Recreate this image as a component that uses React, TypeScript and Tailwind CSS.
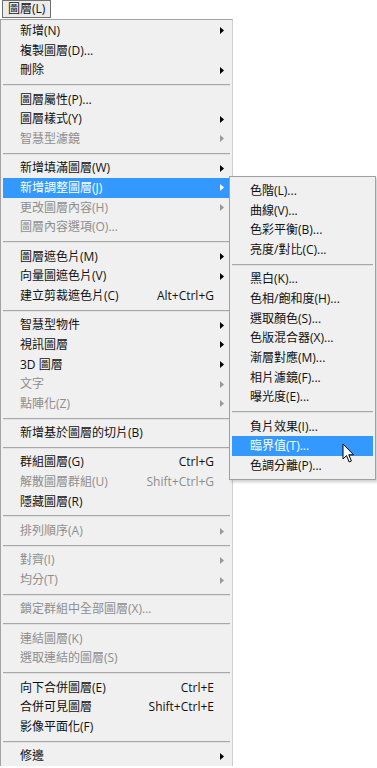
import React from "react";

type Item =
  | { sep: true }
  | {
      sep?: false;
      label: string;
      shortcut?: string;
      arrow?: boolean;
      disabled?: boolean;
      active?: boolean;
    };

const S: Item = { sep: true };

const mainItems: Item[] = [
  { label: "新增(N)", arrow: true },
  { label: "複製圖層(D)..." },
  { label: "刪除", arrow: true },
  S,
  { label: "圖層屬性(P)..." },
  { label: "圖層樣式(Y)", arrow: true },
  { label: "智慧型濾鏡", arrow: true, disabled: true },
  S,
  { label: "新增填滿圖層(W)", arrow: true },
  { label: "新增調整圖層(J)", arrow: true, active: true },
  { label: "更改圖層內容(H)", arrow: true, disabled: true },
  { label: "圖層內容選項(O)...", disabled: true },
  S,
  { label: "圖層遮色片(M)", arrow: true },
  { label: "向量圖遮色片(V)", arrow: true },
  { label: "建立剪裁遮色片(C)", shortcut: "Alt+Ctrl+G" },
  S,
  { label: "智慧型物件", arrow: true },
  { label: "視訊圖層", arrow: true },
  { label: "3D 圖層", arrow: true },
  { label: "文字", arrow: true, disabled: true },
  { label: "點陣化(Z)", arrow: true, disabled: true },
  S,
  { label: "新增基於圖層的切片(B)" },
  S,
  { label: "群組圖層(G)", shortcut: "Ctrl+G" },
  { label: "解散圖層群組(U)", shortcut: "Shift+Ctrl+G", disabled: true },
  { label: "隱藏圖層(R)" },
  S,
  { label: "排列順序(A)", arrow: true, disabled: true },
  S,
  { label: "對齊(I)", arrow: true, disabled: true },
  { label: "均分(T)", arrow: true, disabled: true },
  S,
  { label: "鎖定群組中全部圖層(X)...", disabled: true },
  S,
  { label: "連結圖層(K)", disabled: true },
  { label: "選取連結的圖層(S)", disabled: true },
  S,
  { label: "向下合併圖層(E)", shortcut: "Ctrl+E" },
  { label: "合併可見圖層", shortcut: "Shift+Ctrl+E" },
  { label: "影像平面化(F)" },
  S,
  { label: "修邊", arrow: true },
];

const subItems: Item[] = [
  { label: "色階(L)..." },
  { label: "曲線(V)..." },
  { label: "色彩平衡(B)..." },
  { label: "亮度/對比(C)..." },
  S,
  { label: "黑白(K)..." },
  { label: "色相/飽和度(H)..." },
  { label: "選取顏色(S)..." },
  { label: "色版混合器(X)..." },
  { label: "漸層對應(M)..." },
  { label: "相片濾鏡(F)..." },
  { label: "曝光度(E)..." },
  S,
  { label: "負片效果(I)..." },
  { label: "臨界值(T)...", active: true },
  { label: "色調分離(P)..." },
];

function Arrow({ color }: { color: string }) {
  return (
    <svg width="4" height="7" viewBox="0 0 4 7" className="block">
      <path d="M0 0 L4 3.5 L0 7 Z" fill={color} />
    </svg>
  );
}

function Separator() {
  return (
    <div className="h-[9.6px] flex flex-col justify-center">
      <div className="h-px bg-[#a8a8a8]" />
      <div className="h-px bg-[#e2e2e2]" />
    </div>
  );
}

function MenuRow({ item, sub }: { item: Exclude<Item, { sep: true }>; sub?: boolean }) {
  const color = item.active ? "text-white" : item.disabled ? "text-[#8e8e8e]" : "text-[#111]";
  const arrowColor = item.active ? "#ffffff" : item.disabled ? "#9a9a9a" : "#000000";
  return (
    <div
      className={`flex h-[19.7px] items-center leading-none ${color} ${
        item.active ? "bg-[#3399ff]" : ""
      } ${sub ? "pl-[18px]" : "pl-[17px]"}`}
    >
      <span className="flex-1 whitespace-nowrap">{item.label}</span>
      {item.shortcut && <span className="whitespace-nowrap">{item.shortcut}</span>}
      {!sub && (
        <span className="w-[16px] flex justify-start pl-[6px]">
          {item.arrow && <Arrow color={arrowColor} />}
        </span>
      )}
    </div>
  );
}

function Cursor() {
  return (
    <svg
      width="14"
      height="22"
      viewBox="0 0 14 22"
      className="absolute left-[342px] top-[443px]"
    >
      <path
        d="M1 1 L1 16 L4.5 12.6 L7.2 19 L9.4 18 L6.8 11.8 L11.6 11.8 Z"
        fill="#ffffff"
        stroke="#000000"
        strokeWidth="1"
        strokeLinejoin="round"
      />
    </svg>
  );
}

export default function App() {
  return (
    <div
      className="relative w-[377px] h-[768px] overflow-hidden bg-white text-[12px]"
      style={{ fontFamily: '"Open Sans", "Noto Sans CJK TC", sans-serif' }}
    >
      {/* menu bar */}
      <div className="h-[19px] flex items-start pl-[2px]">
        <div className="h-[18px] px-[5px] flex items-center leading-none border border-[#6f6f6f] bg-[#ececec] text-[#111]">
          圖層(L)
        </div>
      </div>

      {/* main dropdown */}
      <div className="w-[233px] bg-[#f0f0f0] border-t border-l border-[#a3a3a3] border-r border-r-[#cfcfcf] pt-[1px] px-[2px]">
        {mainItems.map((it, i) =>
          it.sep ? <Separator key={i} /> : <MenuRow key={i} item={it} />
        )}
      </div>

      {/* adjustment layer submenu */}
      <div className="absolute left-[229px] top-[176px] w-[147px] bg-[#f0f0f0] border border-[#a0a0a0] pt-[4px] pb-[3px] px-[2px] shadow-[2px_2px_3px_rgba(0,0,0,0.2)]">
        {subItems.map((it, i) =>
          it.sep ? <Separator key={i} /> : <MenuRow key={i} item={it} sub />
        )}
      </div>

      <Cursor />
    </div>
  );
}
